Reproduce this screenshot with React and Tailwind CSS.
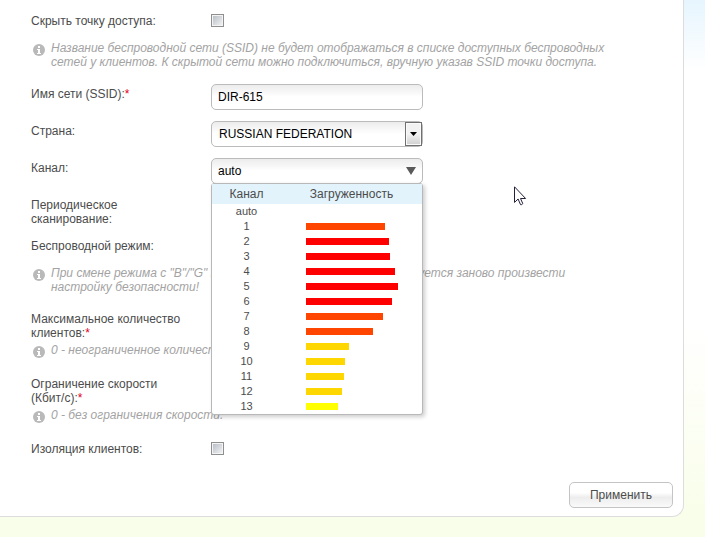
import { useState } from 'react';

const channels = [
  { name: '1', load: 79, color: 'bg-[#ff4500]' },
  { name: '2', load: 83, color: 'bg-[#ff0000]' },
  { name: '3', load: 84, color: 'bg-[#ff0000]' },
  { name: '4', load: 89, color: 'bg-[#ff0000]' },
  { name: '5', load: 92, color: 'bg-[#ff0000]' },
  { name: '6', load: 86, color: 'bg-[#ff0000]' },
  { name: '7', load: 77, color: 'bg-[#ff4500]' },
  { name: '8', load: 67, color: 'bg-[#ff4500]' },
  { name: '9', load: 43, color: 'bg-[#ffd700]' },
  { name: '10', load: 39, color: 'bg-[#ffd700]' },
  { name: '11', load: 38, color: 'bg-[#ffd700]' },
  { name: '12', load: 36, color: 'bg-[#ffd700]' },
  { name: '13', load: 32, color: 'bg-[#ffff00]' }
];

const box =
  'block w-full h-[26px] rounded-[5px] border border-[#bbbbbb] bg-linear-to-b from-[#ececec] to-white to-50% text-[12px] leading-[14px] text-black outline-none';

function Field({ id, label, required, hint, children }) {
  return (
    <div className={hint ? 'mb-[15px]' : 'mb-[11px]'}>
      <div className="flex min-h-[26px] items-start">
        <label htmlFor={id} className="-mb-px w-[180px] shrink-0 pr-6 pt-[3px]">
          {label}
          {required && <span className="text-[#e2001a]">*</span>}
        </label>
        {children}
      </div>
      {hint && (
        <div className="mt-1 flex min-h-4 max-w-[584px] gap-1.5 pl-0.5 italic text-[#a3a3a3]">
          <InfoIcon />
          <p>{hint}</p>
        </div>
      )}
    </div>
  );
}

function InfoIcon() {
  return (
    <svg className="mt-[3px] h-3 w-3 shrink-0" viewBox="0 0 12 12" aria-hidden="true">
      <circle cx="6" cy="6" r="6" fill="#b9b9b9" />
      <path d="M5 2h2v2H5zM4 5h3v4h1v1H4V9h1V6H4z" fill="#fff" />
    </svg>
  );
}

function CheckBox({ id }) {
  return (
    <input
      id={id}
      type="checkbox"
      className="mt-[3px] h-[13px] w-[13px] appearance-none border border-[#8e8f8f] bg-linear-to-br from-[#b4bac4] to-[#f6f6f6] shadow-[inset_0_0_0_1px_#f4f4f4] checked:from-[#5b7ca8]"
    />
  );
}

function TextBox({ id, value }) {
  return (
    <div className="w-[212px]">
      <input id={id} type="text" defaultValue={value} className={`${box} px-1.5`} />
    </div>
  );
}

function SelectBox({ id, options }) {
  return (
    <div className="relative w-[212px]">
      <select id={id} className={`${box} appearance-none pl-[7px] pr-5`}>
        {options.map((o) => (
          <option key={o}>{o}</option>
        ))}
      </select>
      <span className="pointer-events-none absolute inset-y-px right-px flex w-[17px] items-center justify-center border border-[#707070] bg-linear-to-b from-[#f2f2f2] from-50% to-[#cfcfcf] shadow-[inset_0_0_0_1px_#fafafa]">
        <svg className="h-1 w-[7px]" viewBox="0 0 7 4" aria-hidden="true">
          <path d="M0 0h7L3.5 4z" fill="#000" />
        </svg>
      </span>
    </div>
  );
}

function ChannelPicker({ id }) {
  const [open, setOpen] = useState(true);
  const [value, setValue] = useState('auto');

  const pick = (name) => {
    setValue(name);
    setOpen(false);
  };

  return (
    <div className="relative w-[212px]">
      <button
        id={id}
        type="button"
        aria-haspopup="true"
        aria-expanded={open}
        onClick={() => setOpen(!open)}
        className={`${box} px-1.5`}
      >
        <span className="flex items-center justify-between">
          {value}
          <svg className="h-2 w-2.5" viewBox="0 0 10 8" aria-hidden="true">
            <path d="M0 0h10L5 8z" fill="#5a5a5a" />
          </svg>
        </span>
      </button>

      {open && (
        <div className="absolute inset-x-0 top-[25px] z-10 rounded-[3px] border border-[#b8b8b8] bg-white shadow-[2px_2px_4px_rgba(0,0,0,0.2)]">
          <table className="w-full table-fixed border-collapse text-center text-[11px] leading-[15px]">
            <thead>
              <tr className="h-5 bg-[#e2f3fc] text-[12px]">
                <th className="w-[69px] font-normal">Канал</th>
                <th className="font-normal">Загруженность</th>
              </tr>
            </thead>
            <tbody>
              <tr className="h-[15px] cursor-pointer" onClick={() => pick('auto')}>
                <td>auto</td>
                <td />
              </tr>
              {channels.map((c) => (
                <tr key={c.name} className="h-[15px] cursor-pointer" onClick={() => pick(c.name)}>
                  <td>{c.name}</td>
                  <td className="pl-[25px]">
                    <div className={`h-[7px] ${c.color}`} style={{ width: `${c.load}px` }} />
                  </td>
                </tr>
              ))}
            </tbody>
          </table>
        </div>
      )}
    </div>
  );
}

export default function App() {
  return (
    <div className="min-h-screen bg-[linear-gradient(#e6f5fe,#ffffff_70px,#ffffff_60%,#f9feea_96%)] font-['Liberation_Sans',Arial,sans-serif] text-[12px] leading-[14px] text-[#4c4c4c]">
      <form
        onSubmit={(e) => e.preventDefault()}
        className="relative mr-[21px] rounded-br-[12px] border-b border-r border-[#dddddd] bg-white pb-2 pl-[31px] pr-2.5 pt-[11px]"
      >
        <Field
          id="hide"
          label="Скрыть точку доступа:"
          hint="Название беспроводной сети (SSID) не будет отображаться в списке доступных беспроводных сетей у клиентов. К скрытой сети можно подключиться, вручную указав SSID точки доступа."
        >
          <CheckBox id="hide" />
        </Field>
        <Field id="ssid" label="Имя сети (SSID):" required>
          <TextBox id="ssid" value="DIR-615" />
        </Field>
        <Field id="country" label="Страна:">
          <SelectBox id="country" options={['RUSSIAN FEDERATION']} />
        </Field>
        <Field id="channel" label="Канал:">
          <ChannelPicker id="channel" />
        </Field>
        <Field id="scan" label="Периодическое сканирование:">
          <CheckBox id="scan" />
        </Field>
        <Field
          id="mode"
          label="Беспроводной режим:"
          hint={'При смене режима с "B"/"G" на режим с поддержкой «N», потребуется заново произвести настройку безопасности!'}
        >
          <SelectBox id="mode" options={['802.11 B/G/N mixed']} />
        </Field>
        <Field id="clients" label="Максимальное количество клиентов:" required hint="0 - неограниченное количество.">
          <TextBox id="clients" value="0" />
        </Field>
        <Field id="speed" label="Ограничение скорости (Кбит/с):" required hint="0 - без ограничения скорости.">
          <TextBox id="speed" value="0" />
        </Field>
        <Field id="isolation" label="Изоляция клиентов:">
          <CheckBox id="isolation" />
        </Field>

        <div className="mt-[17px] flex justify-end">
          <button
            type="submit"
            className="h-[26px] w-[104px] rounded-[5px] border border-[#c4c4c4] bg-linear-to-b from-white from-40% via-[#ededed] via-60% to-[#fafafa]"
          >
            Применить
          </button>
        </div>

        {/* mouse pointer */}
        <svg className="pointer-events-none absolute left-[514px] top-[186px] h-[20px] w-[13px]" viewBox="0 0 13 20" aria-hidden="true">
          <path
            d="M.5 .8v15.6l3.6-3.4 2.4 5.6q1.300 .5 2.300-1l-2.300-5.100h5.100z"
            fill="#fff"
            stroke="#23203a"
            strokeWidth="1"
          />
        </svg>
      </form>
    </div>
  );
}
